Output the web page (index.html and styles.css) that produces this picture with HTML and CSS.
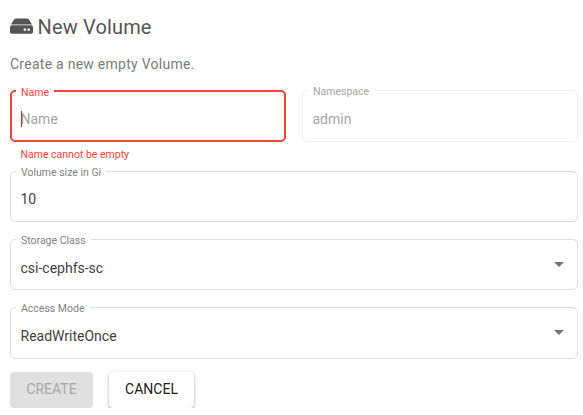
FILE: index.html
```html
<!DOCTYPE html>
<html lang="en">
<head>
<meta charset="utf-8">
<title>New Volume</title>
<link rel="stylesheet" href="styles.css">
</head>
<body>
<form class="page">
  <h1 class="title">
    <svg class="drive" viewBox="0 0 23 16" aria-hidden="true"><path fill-rule="evenodd" d="M2 7.200H21Q23 7.200 23 9V14Q23 15.700 21 15.700H2Q0 15.700 0 14V9Q0 7.200 2 7.200ZM13.700 10.500V12.700H16V10.500ZM17.500 10.500V12.700H19.800V10.500ZM.9 6.400L4.500 1.100Q5 .4 6 .4H17Q18 .4 18.500 1.100L22.100 6.400Z"/></svg>
    <span class="title-text">New Volume</span>
  </h1>
  <p class="intro">Create a new empty Volume.</p>
  <div class="row">
    <div class="field invalid tall"><span class="label">Name</span><span class="value"><i class="caret"></i>Name</span></div>
    <div class="field disabled tall"><span class="label">Namespace</span><span class="value">admin</span></div>
  </div>
  <p class="error">Name cannot be empty</p>
  <div class="stack">
    <div class="field"><span class="label size-label">Volume size in Gi</span><span class="value">10</span></div>
    <div class="field select"><span class="label">Storage Class</span><span class="value">csi-cephfs-sc</span><i class="arrow"></i></div>
    <div class="field select tall"><span class="label">Access Mode</span><span class="value">ReadWriteOnce</span><i class="arrow"></i></div>
  </div>
  <div class="actions">
    <button class="btn create" type="button" disabled>CREATE</button>
    <button class="btn cancel" type="button">CANCEL</button>
  </div>
</form>
</body>
</html>
```
FILE: styles.css
```css
* { box-sizing: border-box; }
body { margin: 0; background: #fff; font: 14px/20px Roboto, sans-serif; color: #424242; overflow: hidden; }
.page { width: 578px; padding: 15px 0 0 10px; }
.title { display: flex; align-items: center; gap: 4.500px; height: 24px; margin: 0; font-size: 20px; line-height: 24px; font-weight: 400; letter-spacing: .15px; color: #555; }
.drive { width: 23px; height: 16px; margin-top: -2px; fill: #555; }
.intro { margin: 15px 0 16px; color: #7b7b7b; letter-spacing: .26px; }
.row { display: flex; gap: 16px; }
.row .field { flex: 1; }
.field { position: relative; display: flex; align-items: center; justify-content: space-between; height: 51px; padding: 5px 13px 0 9.5px; border: 1px solid #dedede; border-radius: 5px; }
.tall { height: 52px; }
.label { position: absolute; top: -6px; left: 5px; padding: 0 5px; background: #fff; font-size: 10.5px; line-height: 14px; color: #828282; }
.value { position: relative; }
.select { padding-top: 6px; }
.select.tall { padding-top: 5px; }
.invalid { border: 2px solid #f44336; padding: 6px 12px 0 8.5px; }
.invalid .label { left: 4px; color: #f44336; }
.invalid .value { color: #a5a5a5; }
.caret { position: absolute; left: .5px; top: 2px; width: 1px; height: 16px; background: #c62828; }
.disabled { border-color: #efefef; padding-top: 6px; }
.disabled .label, .disabled .value { color: #a5a5a5; }
.error { margin: 6px 0 9px 10.5px; font-size: 10.5px; line-height: 14px; color: #f44336; }
.stack { display: flex; flex-direction: column; gap: 17px; }
.arrow { width: 10px; height: 5px; margin-top: -6px; background: #757575; clip-path: polygon(0 0, 100% 0, 50% 100%); }
.actions { display: flex; gap: 16px; margin-top: 13px; }
.btn { height: 36px; padding: 0 0 2px; border: 0; border-radius: 4px; font: 14px/34px Roboto, sans-serif; color: #212121; background: #fff; }
.create { width: 83px; background: #e0e0e0; color: #a9a9a9; }
.cancel { width: 85px; box-shadow: 0 1px 2px rgba(0,0,0,.3), 0 1px 4px rgba(0,0,0,.14); }
```
